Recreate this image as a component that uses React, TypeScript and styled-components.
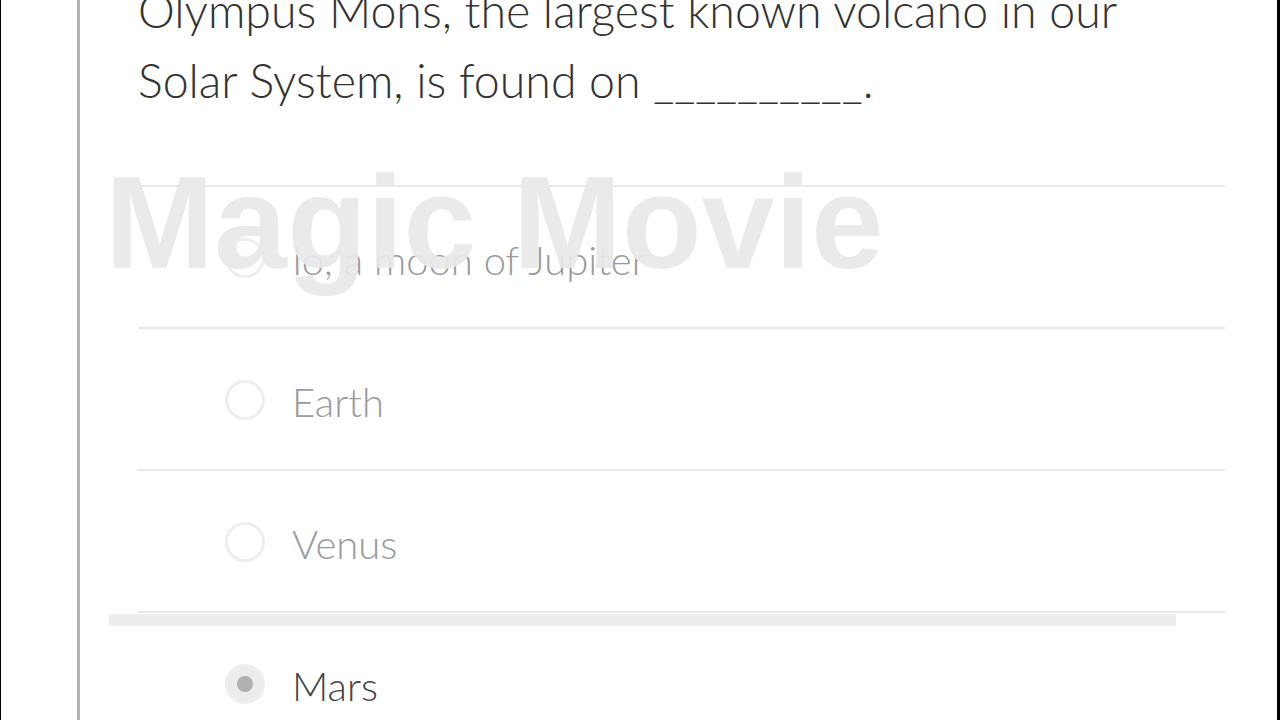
import React from 'react'
import styled, { createGlobalStyle } from 'styled-components'

const GlobalStyle = createGlobalStyle`
  html, body {
    margin: 0;
    padding: 0;
    background: #ffffff;
    overflow: hidden;
  }
  * {
    box-sizing: border-box;
  }
`

interface IOption {
  id: string
  label: string
  selected?: boolean
}

const options: Array<IOption> = [
  { id: 'io', label: 'Io, a moon of Jupiter' },
  { id: 'earth', label: 'Earth' },
  { id: 'venus', label: 'Venus' },
  { id: 'mars', label: 'Mars', selected: true },
]

const Screen = styled.div`
  position: relative;
  width: 1280px;
  height: 720px;
  overflow: hidden;
  background: #ffffff;
  border-left: 1px solid #000000;
  border-right: 3px solid #000000;
  padding-left: 76px;
`

const Card = styled.div`
  display: flow-root;
  height: 100%;
  border-left: 3px solid #b4b4b4;
  padding: 0 52px 0 58px;
  font-family: Lato, 'Open Sans', sans-serif;
  font-weight: 300;
`

const Question = styled.p`
  margin: -25px 0 70px;
  font-size: 46.5px;
  line-height: 70px;
  color: #333333;
`

const OptionList = styled.div`
  display: flex;
  flex-direction: column;
`

const OptionRow = styled.div`
  display: flex;
  align-items: center;
  height: 142px;
  border-top: 2px solid #e9e9e9;
  padding-left: 87px;
  padding-top: 2px;
`

const Radio = styled.span<{ $checked?: boolean }>`
  display: flex;
  align-items: center;
  justify-content: center;
  width: 40px;
  height: 40px;
  border-radius: 50%;
  border: 3px solid #eeeeee;
  background: ${(p) => (p.$checked ? '#ececec' : '#ffffff')};
  margin-right: 27px;
  flex-shrink: 0;

  &::after {
    content: '';
    display: ${(p) => (p.$checked ? 'block' : 'none')};
    width: 16px;
    height: 16px;
    border-radius: 50%;
    background: #b0b0b0;
  }
`

const OptionLabel = styled.span<{ $checked?: boolean }>`
  font-size: 40px;
  padding-top: 4px;
  color: ${(p) => (p.$checked ? '#444444' : '#9a9a9a')};
`

const Watermark = styled.div`
  position: absolute;
  left: 104px;
  top: 148px;
  font-family: 'Liberation Sans', Arial, sans-serif;
  font-weight: 700;
  font-size: 131px;
  line-height: 150px;
  color: rgba(232, 232, 232, 0.93);
  white-space: nowrap;
  pointer-events: none;
`

const WatermarkBar = styled.div`
  position: absolute;
  left: 108px;
  top: 614px;
  width: 1067px;
  height: 12px;
  background: #ececec;
`

const App = (): JSX.Element => {
  return (
    <>
      <GlobalStyle />
      <Screen>
        <Card>
          <Question>
            Olympus Mons, the largest known volcano in our Solar System, is found on __________.
          </Question>
          <OptionList>
            {options.map((item) => (
              <OptionRow key={item.id}>
                <Radio $checked={item.selected} />
                <OptionLabel $checked={item.selected}>{item.label}</OptionLabel>
              </OptionRow>
            ))}
          </OptionList>
        </Card>
        <Watermark>Magic Movie</Watermark>
        <WatermarkBar />
      </Screen>
    </>
  )
}

export default App
